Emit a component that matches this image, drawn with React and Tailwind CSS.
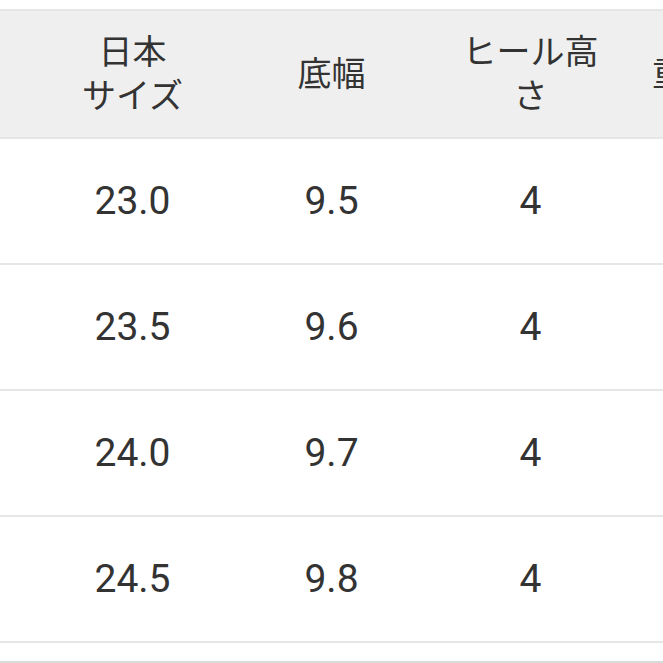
import React from "react";

const headers = [
  ["日本", "サイズ"],
  ["底幅"],
  ["ヒール高", "さ"],
  ["重さ（g）"],
];

const rows = [
  ["23.0", "9.5", "4", ""],
  ["23.5", "9.6", "4", ""],
  ["24.0", "9.7", "4", ""],
  ["24.5", "9.8", "4", ""],
];

export default function App() {
  return (
    <div
      className="w-[663px] h-[663px] overflow-hidden bg-white pt-[9px] text-[#333333]"
      style={{ fontFamily: 'Roboto, "Noto Sans CJK JP", sans-serif' }}
    >
      <div className="w-full">
        <div className="flex h-[130px] pl-[33px] border-y-2 border-[#e6e6e6] bg-[#efefef]">
          {headers.map((h, i) => (
            <div
              key={i}
              className="w-[199px] shrink-0 flex flex-col items-center justify-center text-[34px] leading-[44px]"
            >
              {h.map((line, j) => (
                <span key={j} className="whitespace-nowrap">
                  {line}
                </span>
              ))}
            </div>
          ))}
        </div>
        {rows.map((r, i) => (
          <div key={i} className="flex h-[126px] pl-[33px] border-b-2 border-[#e6e6e6]">
            {r.map((c, j) => (
              <div
                key={j}
                className="w-[199px] shrink-0 flex items-center justify-center text-[39px]"
              >
                {c}
              </div>
            ))}
          </div>
        ))}
      </div>
      <div className="mt-[18px] h-[2px] bg-[#dadada]" />
    </div>
  );
}
